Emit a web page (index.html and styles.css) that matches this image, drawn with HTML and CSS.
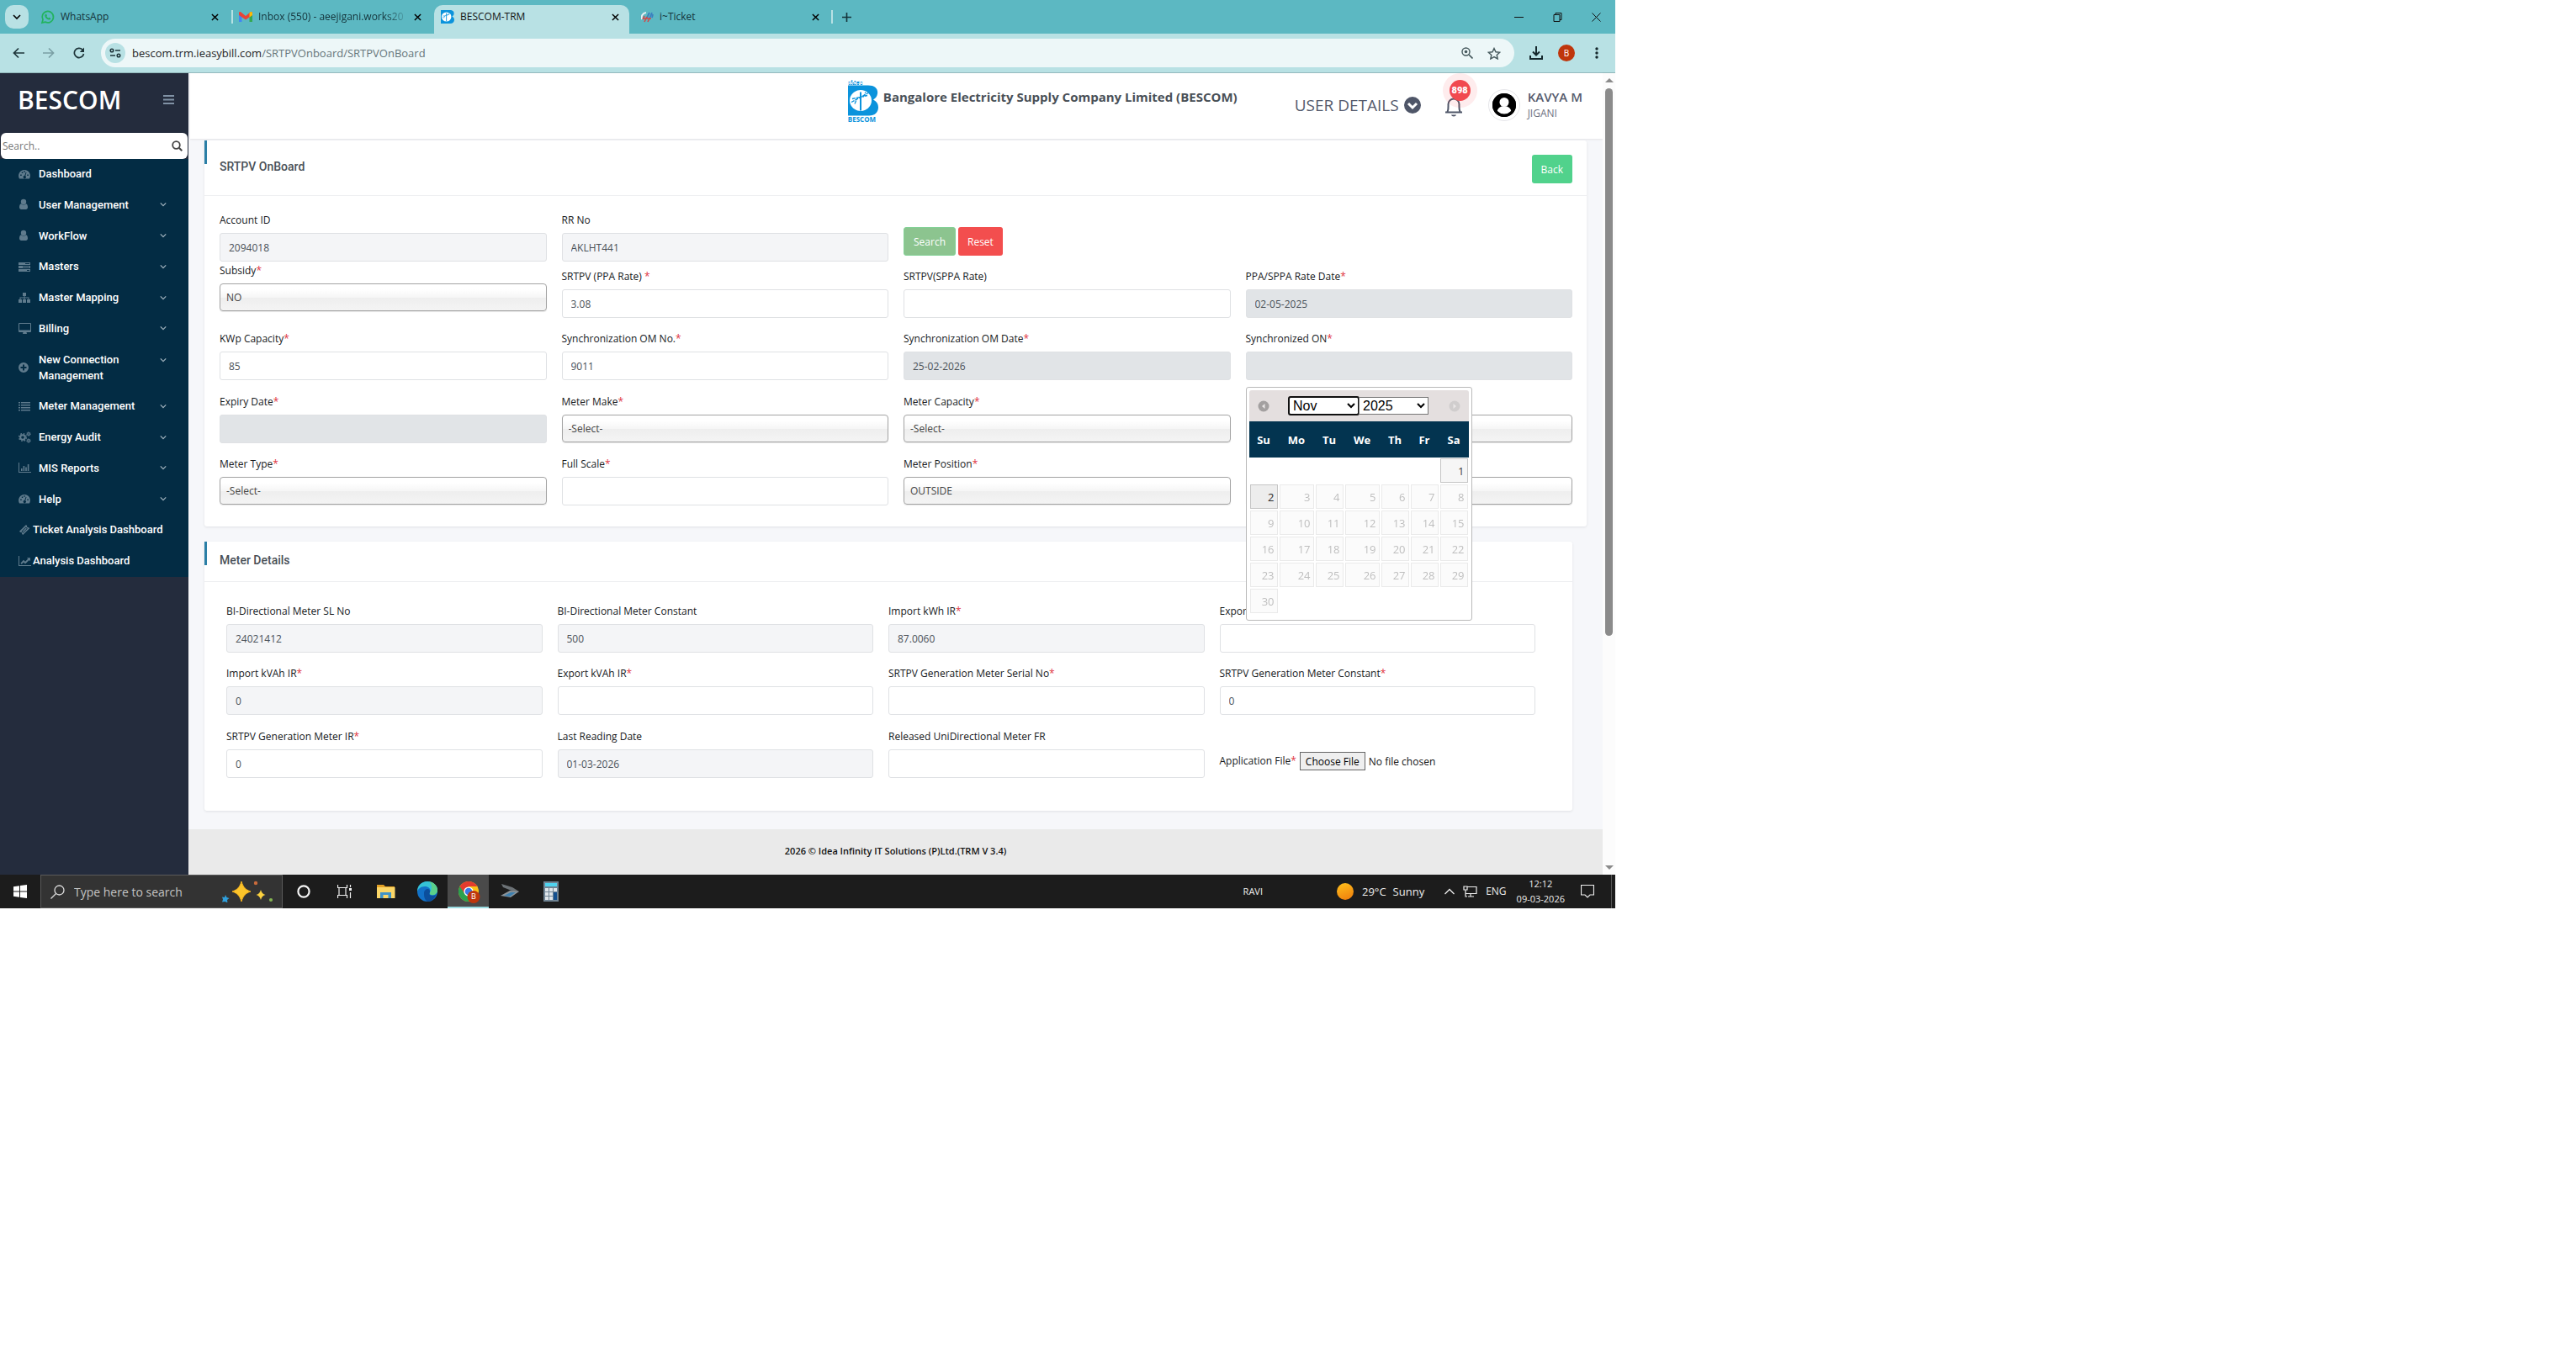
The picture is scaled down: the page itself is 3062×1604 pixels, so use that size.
FILE: index.html
```html
<!DOCTYPE html>
<html lang="en">
<head>
    <meta charset="UTF-8">
    <meta name="viewport" content="width=device-width, initial-scale=1.0">
    <title>BESCOM-TRM</title>
    <link rel="stylesheet" href="styles.css">
</head>
<body>

    <!-- Icon sprite -->
    <svg class="sprite" aria-hidden="true">
        <symbol id="i-close" viewBox="0 0 10 10"><path d="M1 1l8 8M9 1l-8 8" fill="none" stroke="currentColor" stroke-width="1.6"/></symbol>
        <symbol id="i-down" viewBox="0 0 10 10"><path d="M1 3l4 4 4-4" fill="none" stroke="currentColor" stroke-width="1.6"/></symbol>
        <symbol id="i-gauge" viewBox="0 0 14 12"><path fill="currentColor" fill-rule="evenodd" d="M7 1a7 7 0 0 0-6 10.500h12A7 7 0 0 0 7 1zM2.200 6.500h1.500V8H2.200zM3.800 3.500h1.500V5H3.800zM6.300 2.200h1.500v1.500H6.300zM10.300 6.500h1.500V8h-1.500zM8.700 3.800l.8.3-1.300 4.100a1.600 1.600 0 1 1-1-.3z"/></symbol>
        <symbol id="i-user" viewBox="0 0 12 14"><g fill="currentColor"><circle cx="6" cy="4" r="3.200"/><path d="M3 6.300C1.600 6.800 1 8.500 1 10.500 1 12 2 13 3.200 13h5.600C10 13 11 12 11 10.500c0-2-.6-3.700-2-4.200-1.700 1.700-4.300 1.700-6 0z"/></g></symbol>
        <symbol id="i-tasks" viewBox="0 0 14 12"><path fill="currentColor" fill-rule="evenodd" d="M0 1h14v3H0zm8 1v1h5V2zM0 5h14v3H0zm5 1v1h8V6zM0 9h14v3H0zm10 1v1h3v-1z"/></symbol>
        <symbol id="i-sitemap" viewBox="0 0 14 12"><path fill="currentColor" d="M5 0h4v4H7.500v1.500H12.500V8H14v4h-4V8h1.500V6.500h-4V8H9v4H5V8h1.500V6.500h-4V8H4v4H0V8h1.500V5.500h5V4H5z"/></symbol>
        <symbol id="i-desktop" viewBox="0 0 15 13"><path fill="currentColor" fill-rule="evenodd" d="M1 0h13a1 1 0 0 1 1 1v9a1 1 0 0 1-1 1H9.500l.5 2H5l.5-2H1a1 1 0 0 1-1-1V1a1 1 0 0 1 1-1zm0 1v7.500h13V1z"/></symbol>
        <symbol id="i-plus" viewBox="0 0 12 12"><path fill="currentColor" fill-rule="evenodd" d="M6 0a6 6 0 1 0 0 12A6 6 0 0 0 6 0zM5 2.500h2V5h2.500v2H7v2.500H5V7H2.500V5H5z"/></symbol>
        <symbol id="i-list" viewBox="0 0 14 12"><path fill="currentColor" d="M0 1h2v1.600H0zM3 1h11v1.600H3zM0 4h2v1.600H0zM3 4h11v1.600H3zM0 7h2v1.600H0zM3 7h11v1.600H3zM0 10h2v1.600H0zM3 10h11v1.600H3z"/></symbol>
        <symbol id="i-cogs" viewBox="0 0 15 14"><g fill="none" stroke="currentColor"><circle cx="5" cy="7" r="2.800" stroke-width="2"/><circle cx="5" cy="7" r="4.300" stroke-width="1.500" stroke-dasharray="1.700 1.700"/><circle cx="12" cy="3" r="1.400" stroke-width="1.200"/><circle cx="12" cy="3" r="2.300" stroke-dasharray=".9 .9"/><circle cx="12" cy="11" r="1.400" stroke-width="1.200"/><circle cx="12" cy="11" r="2.300" stroke-dasharray=".9 .9"/></g></symbol>
        <symbol id="i-bars" viewBox="0 0 15 12"><path fill="currentColor" d="M0 0h1v11h14v1H0zM3 7h1.600v3H3zM5.600 4h1.600v6H5.600zM8.200 5.500h1.600V10H8.200zM10.800 2h1.600v8h-1.600z"/></symbol>
        <symbol id="i-ticket" viewBox="0 0 14 14"><path fill="currentColor" fill-rule="evenodd" d="M9 1l1.200 1.200a1.300 1.300 0 0 0 1.800 1.800L13.200 5.200 5.200 13 4 11.800A1.300 1.300 0 0 0 2.200 10L1 8.800zM8.800 3.500L3.500 8.800l2 2 5.200-5.300zM8.800 4.600l1 1-4.200 4.200-1-1z"/></symbol>
        <symbol id="i-line" viewBox="0 0 15 12"><path fill="currentColor" d="M0 0h1v11h14v1H0zM2.500 8.500L6 4.800l2 2 3.200-3.300L10 2.300h4v4l-1.300-1.200L8 9.600l-2-2-2.300 2.300z"/></symbol>
        <symbol id="i-bescom" viewBox="0 0 36 36"><path fill="#0b93dc" d="M0 0h24c8 0 12 4 11 10-.4 3-2 5-5 7 4 2 6 5 6 9 0 6-4 10-11 10H0z"/><ellipse cx="15" cy="18" rx="13" ry="12.500" fill="#fff"/><path d="M4 20l20-11M5 16l18-4M8 22l3-7M18 14l3-6" fill="none" stroke="#0b93dc" stroke-width="1.300" stroke-dasharray="4 1"/><path d="M14 8h2v22h-2z" fill="#0b93dc"/></symbol>
    </svg>

    <div class="screen">

        <!-- Browser tabs -->
        <div class="tabs">
            <button class="tab-menu" aria-label="Search tabs"><svg width="10" height="10"><use href="#i-down"/></svg></button>
            <div class="tab">
                <svg width="17" height="17" viewBox="0 0 17 17"><path d="M2 15l1-3.500a6.700 6.700 0 1 1 2.700 2.600z" fill="none" stroke="#22b35e" stroke-width="1.700"/><path d="M6 5l1-.5 1 2-.6.8c.6 1.200 1.200 1.700 2.300 2.300l.8-.8 1.800 1c0 1.500-1.300 2-2.500 1.700C7.500 11 5.500 9 5.200 6.800 5.200 6 5.500 5.400 6 5z" fill="#22b35e"/></svg>
                <span>WhatsApp</span>
                <button aria-label="Close tab"><svg width="9" height="9"><use href="#i-close"/></svg></button>
            </div>
            <div class="tab divided">
                <svg width="16" height="12" viewBox="0 0 16 12"><path d="M0 1h3.500v11H0z" fill="#4285f4"/><path d="M12.500 1H16v11h-3.500z" fill="#34a853"/><path d="M0 1.500C0 0 1.500-.3 2.500.5L8 5 13.500.5C14.500-.3 16 0 16 1.500V4L8 9.500 0 4z" fill="#ea4335"/><path d="M12.500 1.300C14-.6 16 0 16 1.700V4l-3.500 2.500z" fill="#fbbc04"/></svg>
                <span class="fade">Inbox (550) - aeejigani.works20</span>
                <button aria-label="Close tab"><svg width="9" height="9"><use href="#i-close"/></svg></button>
            </div>
            <div class="tab active">
                <svg width="16" height="16"><use href="#i-bescom"/></svg>
                <span>BESCOM-TRM</span>
                <button aria-label="Close tab"><svg width="9" height="9"><use href="#i-close"/></svg></button>
            </div>
            <div class="tab">
                <svg width="15" height="15" viewBox="0 0 15 15"><path d="M1 10a6 6 0 0 1 5-8" fill="none" stroke="#e7eef2" stroke-width="2"/><path d="M7 8l3-6M10 9l3-7M13 8l1-4" stroke="#3a7fc0" stroke-width="1.800"/><path d="M2 10l2-4M4 13l3-6M8 13l2-4M3 9h9" stroke="#d34848" stroke-width="1.600"/></svg>
                <span>i~Ticket</span>
                <button aria-label="Close tab"><svg width="9" height="9"><use href="#i-close"/></svg></button>
            </div>
            <button class="new-tab" aria-label="New tab"><svg width="11" height="11" viewBox="0 0 11 11"><path d="M5.500 0v11M0 5.500h11" stroke="#14333a" stroke-width="1.600"/></svg></button>
            <div class="window-buttons">
                <button aria-label="Minimise"><svg width="11" height="11" viewBox="0 0 11 11"><path d="M0 5.500h11" stroke="#111"/></svg></button>
                <button aria-label="Restore"><svg width="11" height="11" viewBox="0 0 11 11"><path d="M1 2.500h7v8H1zM3 2.500v-2h7v8H8" fill="none" stroke="#111"/></svg></button>
                <button aria-label="Close window"><svg width="11" height="11" viewBox="0 0 11 11"><path d="M.5.5l10 10M10.500.5l-10 10" stroke="#111" fill="none"/></svg></button>
            </div>
        </div>

        <!-- Address bar -->
        <div class="toolbar">
            <button aria-label="Back"><svg width="14" height="14" viewBox="0 0 14 14"><path d="M14 7H2M7 1.500L1.500 7 7 12.500" fill="none" stroke="#1d3439" stroke-width="1.700"/></svg></button>
            <button aria-label="Forward"><svg width="14" height="14" viewBox="0 0 14 14"><path d="M0 7h12M7 1.500L12.500 7 7 12.500" fill="none" stroke="#7a9fa4" stroke-width="1.700"/></svg></button>
            <button aria-label="Reload"><svg width="14" height="14" viewBox="0 0 14 14"><path d="M12.500 8A5.600 5.600 0 1 1 11 3l1.500 1.500" fill="none" stroke="#1d3439" stroke-width="1.700"/><path d="M13 .5V6H7.800z" fill="#1d3439"/></svg></button>
            <div class="address">
                <span class="site-info"><svg width="14" height="12" viewBox="0 0 14 12"><g fill="none" stroke="#1d3439" stroke-width="1.500"><circle cx="3" cy="3" r="1.800"/><path d="M7 3h6M1 9h6"/><circle cx="11" cy="9" r="1.800"/></g></svg></span>
                <span class="url">bescom.trm.ieasybill.com<i>/SRTPVOnboard/SRTPVOnBoard</i></span>
                <svg width="14" height="14" viewBox="0 0 14 14"><circle cx="5.500" cy="5.500" r="4.500" fill="none" stroke="#45585c" stroke-width="1.400"/><circle cx="5.500" cy="5.500" r="1.800" fill="#45585c"/><path d="M9 9l4.500 4.500" stroke="#45585c" stroke-width="1.700"/></svg>
                <svg width="16" height="15" viewBox="0 0 16 15"><path d="M8 1.500l2 4.300 4.700.5-3.500 3.100 1 4.600L8 11.600 3.800 14l1-4.600L1.300 6.300 6 5.800z" fill="none" stroke="#45585c" stroke-width="1.400"/></svg>
            </div>
            <button aria-label="Downloads"><svg width="16" height="16" viewBox="0 0 16 16"><path d="M8 0v10M4 6.500l4 4 4-4M1 11v4h14v-4" fill="none" stroke="#14272b" stroke-width="2"/></svg></button>
            <span class="profile">B</span>
            <button aria-label="Menu"><svg width="4" height="14" viewBox="0 0 4 14"><g fill="#14272b"><circle cx="2" cy="2" r="1.700"/><circle cx="2" cy="7" r="1.700"/><circle cx="2" cy="12" r="1.700"/></g></svg></button>
        </div>

        <div class="app">

            <!-- Sidebar -->
            <aside class="sidebar">
                <div class="brand">
                    <span>BESCOM</span>
                    <button aria-label="Toggle menu"><svg width="13" height="11" viewBox="0 0 13 11"><path d="M0 1h13M0 5.500h13M0 10h13" stroke="#8092a5" stroke-width="2"/></svg></button>
                </div>
                <div class="menu-search">
                    <input type="text" placeholder="Search.." aria-label="Search menu">
                    <svg width="13" height="13" viewBox="0 0 13 13"><circle cx="5.500" cy="5.500" r="4.300" fill="none" stroke="#444" stroke-width="1.800"/><path d="M8.800 8.800L12.300 12.300" stroke="#444" stroke-width="2"/></svg>
                </div>
                <ul class="menu">
                    <li><a href="#"><svg width="14" height="12"><use href="#i-gauge"/></svg><span>Dashboard</span></a></li>
                    <li><a href="#"><svg width="12" height="14"><use href="#i-user"/></svg><span>User Management</span><svg class="arrow"><use href="#i-down"/></svg></a></li>
                    <li><a href="#"><svg width="12" height="14"><use href="#i-user"/></svg><span>WorkFlow</span><svg class="arrow"><use href="#i-down"/></svg></a></li>
                    <li><a href="#"><svg width="14" height="12"><use href="#i-tasks"/></svg><span>Masters</span><svg class="arrow"><use href="#i-down"/></svg></a></li>
                    <li><a href="#"><svg width="14" height="12"><use href="#i-sitemap"/></svg><span>Master Mapping</span><svg class="arrow"><use href="#i-down"/></svg></a></li>
                    <li><a href="#"><svg width="15" height="13"><use href="#i-desktop"/></svg><span>Billing</span><svg class="arrow"><use href="#i-down"/></svg></a></li>
                    <li><a href="#"><svg width="12" height="12"><use href="#i-plus"/></svg><span>New Connection Management</span><svg class="arrow top"><use href="#i-down"/></svg></a></li>
                    <li><a href="#"><svg width="14" height="12"><use href="#i-list"/></svg><span>Meter Management</span><svg class="arrow"><use href="#i-down"/></svg></a></li>
                    <li><a href="#"><svg width="15" height="14"><use href="#i-cogs"/></svg><span>Energy Audit</span><svg class="arrow"><use href="#i-down"/></svg></a></li>
                    <li><a href="#"><svg width="15" height="12"><use href="#i-bars"/></svg><span>MIS Reports</span><svg class="arrow"><use href="#i-down"/></svg></a></li>
                    <li><a href="#"><svg width="14" height="12"><use href="#i-gauge"/></svg><span>Help</span><svg class="arrow"><use href="#i-down"/></svg></a></li>
                    <li class="tight"><a href="#"><svg width="14" height="14"><use href="#i-ticket"/></svg><span>Ticket Analysis Dashboard</span></a></li>
                    <li class="tight"><a href="#"><svg width="15" height="12"><use href="#i-line"/></svg><span>Analysis Dashboard</span></a></li>
                </ul>
            </aside>

            <div class="page">

                <!-- Top bar -->
                <header class="topbar">
                    <div class="company">
                        <div class="logo">
                            <small>ಬೆವಿಕಂ</small>
                            <svg width="36" height="37"><use href="#i-bescom"/></svg>
                            <b>BESCOM</b>
                        </div>
                        <h1>Bangalore Electricity Supply Company Limited (BESCOM)</h1>
                    </div>
                    <a href="#" class="user-details">USER DETAILS
                        <svg width="20" height="20" viewBox="0 0 20 20"><circle cx="10" cy="10" r="10" fill="#4f5668"/><path d="M5 8l5 5 5-5" fill="none" stroke="#fff" stroke-width="3"/></svg>
                    </a>
                    <button class="bell" aria-label="Notifications">
                        <svg width="22" height="24" viewBox="0 0 22 24"><path d="M1 18.500h20M3.500 18C5 15 4.500 12 4.500 9a6.500 6.500 0 0 1 13 0c0 3-.5 6 1 9" fill="none" stroke="#4f5668" stroke-width="2"/><path d="M8 21.500h6c-.5 2.500-5.500 2.500-6 0z" fill="#4f5668"/></svg>
                        <span class="count">898</span>
                    </button>
                    <div class="account">
                        <span class="avatar"><svg width="28" height="28" viewBox="0 0 28 28"><circle cx="14" cy="14" r="14" fill="#000"/><circle cx="14" cy="10.500" r="5.500" fill="#fff"/><path d="M5 23c1-5 4-7 6-7.500h6c2 .5 5 2.500 6 7.500-5 4-13 4-18 0z" fill="#fff"/><circle cx="14" cy="14" r="12.300" fill="none" stroke="#000" stroke-width="3.400"/></svg></span>
                        <div><strong>KAVYA M</strong><span>JIGANI</span></div>
                    </div>
                </header>

                <!-- SRTPV OnBoard -->
                <section class="card">
                    <div class="card-head main-head">
                        <h2>SRTPV OnBoard</h2>
                        <button class="btn btn-back">Back</button>
                    </div>
                    <div class="form-grid onboard">
                        <div class="field"><label for="account">Account ID</label><input type="text" id="account" value="2094018" readonly></div>
                        <div class="field"><label for="rrno">RR No</label><input type="text" id="rrno" value="AKLHT441" readonly></div>
                        <div class="actions"><button class="btn btn-search">Search</button><button class="btn btn-reset">Reset</button></div>
                        <div></div>

                        <div class="field"><label for="subsidy">Subsidy<em>*</em></label><select id="subsidy"><option>NO</option></select></div>
                        <div class="field"><label for="ppa">SRTPV (PPA Rate) <em>*</em></label><input type="text" id="ppa" value="3.08"></div>
                        <div class="field"><label for="sppa">SRTPV(SPPA Rate)</label><input type="text" id="sppa"></div>
                        <div class="field"><label for="ratedate">PPA/SPPA Rate Date<em>*</em></label><input type="text" id="ratedate" value="02-05-2025" disabled></div>

                        <div class="field"><label for="kwp">KWp Capacity<em>*</em></label><input type="text" id="kwp" value="85"></div>
                        <div class="field"><label for="omno">Synchronization OM No.<em>*</em></label><input type="text" id="omno" value="9011"></div>
                        <div class="field"><label for="omdate">Synchronization OM Date<em>*</em></label><input type="text" id="omdate" value="25-02-2026" disabled></div>
                        <div class="field has-calendar">
                            <label for="syncon">Synchronized ON<em>*</em></label><input type="text" id="syncon" disabled>
                            <div class="calendar">
                                <div class="calendar-head">
                                    <button aria-label="Prev"><svg width="14" height="14" viewBox="0 0 14 14"><circle cx="7" cy="7" r="6.500" fill="#a3a0a0"/><path d="M8.500 4v6L5 7z" fill="#e9e6e6"/></svg></button>
                                    <div>
                                        <select class="focused" aria-label="Month"><option>Nov</option></select><select aria-label="Year"><option>2025</option></select>
                                    </div>
                                    <button aria-label="Next"><svg width="14" height="14" viewBox="0 0 14 14"><circle cx="7" cy="7" r="6.500" fill="#d0cdcd"/><path d="M5.500 4v6L9 7z" fill="#e9e6e6"/></svg></button>
                                </div>
                                <table>
                                    <thead><tr><th>Su</th><th class="wide">Mo</th><th>Tu</th><th class="wide">We</th><th>Th</th><th>Fr</th><th>Sa</th></tr></thead>
                                    <tbody>
                                        <tr><td></td><td></td><td></td><td></td><td></td><td></td><td><a href="#">1</a></td></tr>
                                        <tr><td><a href="#" class="current">2</a></td><td><span>3</span></td><td><span>4</span></td><td><span>5</span></td><td><span>6</span></td><td><span>7</span></td><td><span>8</span></td></tr>
                                        <tr><td><span>9</span></td><td><span>10</span></td><td><span>11</span></td><td><span>12</span></td><td><span>13</span></td><td><span>14</span></td><td><span>15</span></td></tr>
                                        <tr><td><span>16</span></td><td><span>17</span></td><td><span>18</span></td><td><span>19</span></td><td><span>20</span></td><td><span>21</span></td><td><span>22</span></td></tr>
                                        <tr><td><span>23</span></td><td><span>24</span></td><td><span>25</span></td><td><span>26</span></td><td><span>27</span></td><td><span>28</span></td><td><span>29</span></td></tr>
                                        <tr><td><span>30</span></td><td></td><td></td><td></td><td></td><td></td><td></td></tr>
                                    </tbody>
                                </table>
                            </div>
                        </div>

                        <div class="field"><label for="expiry">Expiry Date<em>*</em></label><input type="text" id="expiry" disabled></div>
                        <div class="field"><label for="make">Meter Make<em>*</em></label><select id="make"><option>-Select-</option></select></div>
                        <div class="field"><label for="capacity">Meter Capacity<em>*</em></label><select id="capacity"><option>-Select-</option></select></div>
                        <div class="field no-label"><select aria-label="Meter option"><option></option></select></div>

                        <div class="field"><label for="mtype">Meter Type<em>*</em></label><select id="mtype"><option>-Select-</option></select></div>
                        <div class="field"><label for="scale">Full Scale<em>*</em></label><input type="text" id="scale"></div>
                        <div class="field"><label for="position">Meter Position<em>*</em></label><select id="position"><option>OUTSIDE</option></select></div>
                        <div class="field no-label"><select aria-label="Position option"><option></option></select></div>
                    </div>
                </section>

                <!-- Meter Details -->
                <section class="card card-meter">
                    <div class="card-head"><h2>Meter Details</h2></div>
                    <div class="form-grid meter">
                        <div class="field"><label for="slno">BI-Directional Meter SL No</label><input type="text" id="slno" value="24021412" readonly></div>
                        <div class="field"><label for="const">BI-Directional Meter Constant</label><input type="text" id="const" value="500" readonly></div>
                        <div class="field"><label for="ikwh">Import kWh IR<em>*</em></label><input type="text" id="ikwh" value="87.0060" readonly></div>
                        <div class="field"><label for="ekwh">Export kWh IR<em>*</em></label><input type="text" id="ekwh"></div>

                        <div class="field"><label for="ikvah">Import kVAh IR<em>*</em></label><input type="text" id="ikvah" value="0" readonly></div>
                        <div class="field"><label for="ekvah">Export kVAh IR<em>*</em></label><input type="text" id="ekvah"></div>
                        <div class="field"><label for="gserial">SRTPV Generation Meter Serial No<em>*</em></label><input type="text" id="gserial"></div>
                        <div class="field"><label for="gconst">SRTPV Generation Meter Constant<em>*</em></label><input type="text" id="gconst" value="0"></div>

                        <div class="field"><label for="gir">SRTPV Generation Meter IR<em>*</em></label><input type="text" id="gir" value="0"></div>
                        <div class="field"><label for="lastread">Last Reading Date</label><input type="text" id="lastread" value="01-03-2026" readonly></div>
                        <div class="field"><label for="released">Released UniDirectional Meter FR</label><input type="text" id="released"></div>
                        <div class="file-field"><label for="appfile">Application File<em>*</em></label><input type="file" id="appfile"></div>
                    </div>
                </section>

                <footer class="footer">2026 © Idea Infinity IT Solutions (P)Ltd.(TRM V 3.4)</footer>
            </div>

            <!-- Page scrollbar -->
            <div class="scrollbar">
                <span class="scroll-up"></span>
                <div class="track"><div class="thumb"></div></div>
                <span class="scroll-down"></span>
            </div>
        </div>

        <!-- Taskbar -->
        <div class="taskbar">
            <button class="start" aria-label="Start"><svg width="16" height="16" viewBox="0 0 16 16"><path fill="#fff" d="M0 2.200l7-1v6.300H0zM8 1l8-1v7.500H8zM0 8.500h7v6.300l-7-1zM8 8.500h8V16l-8-1z"/></svg></button>
            <div class="task-search">
                <svg width="17" height="17" viewBox="0 0 17 17"><circle cx="10.500" cy="6.500" r="5.500" fill="none" stroke="#ddd" stroke-width="1.300"/><path d="M6.500 10.500L.5 16.500" stroke="#ddd" stroke-width="1.300"/></svg>
                <input type="text" placeholder="Type here to search" aria-label="Type here to search">
                <svg width="62" height="26" viewBox="0 0 62 26"><path d="M24 1c2 7 5 10 11 12-6 2-9 5-11 12-2-7-5-10-11-12 6-2 9-5 11-12z" fill="#fcc42a" stroke="#f3b11f"/><path d="M47 11c1 3.500 2.500 5 5.500 6-3 1-4.500 2.500-5.500 6-1-3.500-2.500-5-5.500-6 3-1 4.500-2.500 5.500-6z" fill="#fbd13f"/><path d="M5 17l1.500 3 3 1-2.500 2 .5 3.500-3-1.500-3.500.5 1-3-1-3 3 .5z" fill="#2f9fdc"/><circle cx="41" cy="3" r="2.200" fill="#c96b3c"/><circle cx="59" cy="23" r="2.100" fill="#84b552"/></svg>
            </div>
            <button class="task" aria-label="Cortana"><svg width="16" height="16" viewBox="0 0 16 16"><circle cx="8" cy="8" r="6.600" fill="none" stroke="#f4f4f4" stroke-width="2.200"/></svg></button>
            <button class="task" aria-label="Task view"><svg width="17" height="16" viewBox="0 0 17 16"><path d="M.5 0v3.500h11V0M.5 16v-3.500h11V16M2 3.500v9M10 3.500v9M15.500 0v3M15.500 9v7" fill="none" stroke="#eee" stroke-width="1.200"/><path d="M14 4h3v3h-3z" fill="#eee"/></svg></button>
            <button class="task" aria-label="File Explorer"><svg width="22" height="18" viewBox="0 0 22 18"><path d="M0 1h8l2 2h11v4H0z" fill="#e2a025"/><path d="M0 4h21.500v13H0z" fill="#fbd667"/><path d="M4 17v-7h13v7h-3.500v-4h-6v4z" fill="#3f93c8"/></svg></button>
            <button class="task" aria-label="Edge"><svg width="24" height="24" viewBox="0 0 24 24"><circle cx="12" cy="12" r="12" fill="#1272c8"/><path d="M0 12C0 5 5 0 12 0s12 5 12 10c0 4-3 6-6 6-2 0-4-1-3-3 2-4-2-7-6-7-5 0-8 3-9 6z" fill="#35c3d6"/><path d="M14 .2c6 1 10 5 10 10 0 4-3 6-6 6-2 0-4-1-3-3C18 9 18 4 14 .2z" fill="#5bd18a"/><path d="M8 14c0-3 2-5 5-5 2 1 2.500 3 1.500 5-1 3 3 4 8 2-2 5-6 8-10 8-4-2-4.500-6-4.500-10z" fill="#0c4f9c"/></svg></button>
            <button class="task open" aria-label="Chrome"><svg width="26" height="26" viewBox="0 0 26 26"><circle cx="12" cy="12" r="12" fill="#fbc116"/><path d="M12 12L1.600 6A12 12 0 0 0 12 24l4-7z" fill="#2ca14e"/><path d="M12 6h10.400A12 12 0 0 0 1.600 6L7 14z" fill="#e33b2e"/><circle cx="12" cy="12" r="5.600" fill="#fff"/><circle cx="12" cy="12" r="4.300" fill="#3b78e7"/><circle cx="18" cy="18.500" r="7.500" fill="#bf360c"/></svg><span>B</span></button>
            <button class="task" aria-label="Scanner"><svg width="24" height="18" viewBox="0 0 24 18"><path d="M2 0l13 4 8 5-4 1L4 4z" fill="#6c7276"/><path d="M1 14l11-6 11 1-10 7z" fill="#8d9499"/><path d="M5 14l8-4 6 0-7 5z" fill="#3d7fae"/></svg></button>
            <button class="task" aria-label="Calculator"><svg width="18" height="24" viewBox="0 0 18 24"><path d="M0 0h18v24H0z" fill="#6f8393"/><path d="M2 2h14v4H2z" fill="#4fd3ef"/><path d="M2 8h4v4H2zM7 8h4v4H7zM12 8h4v4h-4zM2 13h4v4H2zM7 13h4v4H7zM2 18h4v4H2zM7 18h4v4H7z" fill="#dfe5ea"/><path d="M12 13h4v9h-4z" fill="#14508f"/></svg></button>
            <div class="tray">
                <span class="ravi">RAVI</span>
                <span class="weather"><i></i>29°C <b>Sunny</b></span>
                <svg width="12" height="8" viewBox="0 0 12 8"><path d="M.5 7L6 1.500 11.500 7" fill="none" stroke="#eee" stroke-width="1.300"/></svg>
                <svg width="17" height="14" viewBox="0 0 17 14"><path d="M5 1.500h11v8H3V5M9 9.500v3M6 13h7M1 1h4v4H1zM3 5v8h2" fill="none" stroke="#eee" stroke-width="1.200"/></svg>
                <span class="lang">ENG</span>
                <span class="clock">12:12<br>09-03-2026</span>
                <svg width="16" height="16" viewBox="0 0 16 16"><path d="M.5.5h15v11.500h-4.500L8 15l-3-3H.5z" fill="none" stroke="#eee" stroke-width="1.200"/></svg>
            </div>
        </div>

    </div>

</body>
</html>
```
FILE: styles.css
```css
* {
    box-sizing: border-box;
}
body {
    margin: 0;
    background: #fff;
    font-family: "Open Sans", "Noto Sans", sans-serif;
    font-size: 12px;
    line-height: 20px;
    color: #16191c;
}
button, input, select {
    font-family: inherit;
    font-size: inherit;
}
button {
    border: none;
    background: none;
    padding: 0;
    cursor: pointer;
}
svg {
    display: block;
    flex: none;
}
a {
    text-decoration: none;
}
.sprite {
    display: none;
}
.screen {
    max-width: 1920px;
}

/* Browser tabs */
.tabs {
    display: flex;
    height: 40px;
    padding: 6px 17px 0 6px;
    background: #5cb8c2;
    color: #14333a;
}
.tab-menu {
    display: flex;
    align-items: center;
    justify-content: center;
    width: 28px;
    height: 28px;
    margin-right: 4px;
    border-radius: 10px;
    background: #b8e1e4;
}
.tab {
    display: flex;
    align-items: center;
    gap: 7px;
    width: 237px;
    height: 34px;
    padding: 0 15px 6px 10px;
}
.tab span {
    flex: 1;
    white-space: nowrap;
}
.tab.divided {
    width: 241px;
}
.tab.divided::before, .new-tab::before {
    content: "";
    width: 2px;
    height: 16px;
    margin-right: -7px;
    margin-left: -10px;
    background: #b8e1e4;
}
.tab.divided::before {
    margin-right: 0;
}
.tab .fade {
    flex: none;
    margin-right: auto;
    mask-image: linear-gradient(90deg, #000 88%, rgba(0, 0, 0, 0.2));
}
.tab.active {
    width: 232px;
    padding-right: 12px;
    padding-left: 8px;
    border-radius: 10px 10px 0 0;
    background: #b8e1e4;
    color: #111;
}
.tab.active + .tab {
    padding-right: 11px;
    padding-left: 14px;
}
.new-tab {
    display: flex;
    align-items: center;
    gap: 18px;
    height: 28px;
    margin-left: 13px;
}
.window-buttons {
    display: flex;
    gap: 35px;
    height: 28px;
    margin-left: auto;
}

/* Address bar */
.toolbar {
    display: flex;
    align-items: center;
    gap: 22px;
    height: 47px;
    padding: 0 20px 0 15px;
    background: #b8e1e4;
    border-bottom: 1px solid #90b6ba;
}
.address {
    display: flex;
    flex: 1;
    align-items: center;
    gap: 17px;
    height: 34px;
    margin-left: -3px;
    margin-right: -4px;
    padding: 0 16px 0 5px;
    border-radius: 17px;
    background: #edf7f8;
}
.site-info {
    display: flex;
    align-items: center;
    justify-content: center;
    width: 24px;
    height: 24px;
    border-radius: 50%;
    background: #b8e1e4;
}
.url {
    flex: 1;
    margin-left: -9px;
    font-size: 13px;
    color: #1f2426;
}
.url i {
    font-style: normal;
    color: #66757a;
}
.profile {
    width: 20px;
    height: 20px;
    margin: 0 2px 0 -4px;
    border-radius: 50%;
    background: #bf360c;
    color: #fff;
    font-size: 10px;
    text-align: center;
}

/* Application frame */
.app {
    display: flex;
    background: #f6f7fa;
}
.sidebar {
    flex: none;
    width: 224px;
    background: #242c3d;
}
.brand {
    display: flex;
    justify-content: space-between;
    align-items: center;
    height: 63px;
    padding: 0 17px 0 21px;
    color: #fff;
    font-size: 30px;
    font-weight: 600;
}
.menu-search {
    display: flex;
    align-items: center;
    height: 31px;
    margin: 8px 1px 0;
    padding: 0 6px 0 2px;
    border-radius: 6px;
    background: #fff;
}
.menu-search input {
    flex: 1;
    min-width: 0;
    border: none;
    padding: 0;
    outline: none;
    background: none;
}
.menu {
    display: flex;
    flex-direction: column;
    justify-content: space-between;
    min-height: 497px;
    margin: 0;
    padding: 0 0 2px;
    list-style: none;
    background: #032c44;
}
.menu a {
    display: flex;
    align-items: center;
    padding: 8px 26px 8px 22px;
    color: #fff;
    font-family: Roboto, sans-serif;
    font-size: 13px;
    font-weight: 500;
    line-height: 19px;
}
.menu a svg {
    color: #5f7b8d;
}
.menu a span {
    flex: 1;
    padding-left: 24px;
}
.menu svg:first-child {
    margin-right: -14px;
}
.menu svg[width="12"] {
    margin-right: -12px;
}
.menu svg[width="15"] {
    margin-right: -15px;
}
.menu .tight span {
    padding-left: 17px;
}
.menu a .arrow {
    width: 8px;
    height: 8px;
    color: #9fb1bc;
}
.menu .top {
    align-self: flex-start;
    margin-top: 6px;
}
.page {
    display: flex;
    flex: 1;
    flex-direction: column;
    min-width: 0;
}

/* Top bar */
.topbar {
    display: flex;
    align-items: flex-start;
    height: 78px;
    margin-left: 2px;
    padding-right: 24px;
    background: #fff;
    box-shadow: 0 1px 2px #e3e4e6;
}
.company {
    display: flex;
    flex: 1;
    gap: 6px;
    justify-content: flex-end;
    padding-right: 68px;
}
.company h1 {
    margin: 18px 0 0;
    color: #495057;
    font-size: 15px;
    font-weight: 700;
    line-height: 20px;
    white-space: nowrap;
}
.logo {
    display: flex;
    flex-direction: column;
    padding-top: 7px;
    color: #0b93dc;
}
.logo small, .logo b {
    height: 7px;
    font-size: 8px;
    line-height: 7px;
}
.user-details {
    display: flex;
    align-items: center;
    gap: 6px;
    margin: 28px 28px 0 0;
    color: #555b6d;
    font-size: 19px;
    white-space: nowrap;
}
.bell {
    position: relative;
    margin: 28px 30px 0 0;
}
.count {
    position: absolute;
    top: -20px;
    left: 6px;
    width: 25px;
    height: 25px;
    border-radius: 50%;
    background: #f1494f;
    box-shadow: 0 0 0 8px rgba(241, 73, 79, 0.1);
    color: #fff;
    font-family: Roboto, sans-serif;
    font-size: 11px;
    font-weight: 900;
    line-height: 25px;
}
.account {
    display: flex;
    align-items: center;
    gap: 9px;
    margin-top: 19px;
    color: #6c7080;
    line-height: 19px;
}
.account strong {
    display: block;
    color: #555b6d;
    font-size: 15px;
    font-weight: 600;
}
.avatar {
    padding: 4px;
    border: 1px solid #e6e6ea;
    border-radius: 50%;
}

/* Cards */
.card {
    position: relative;
    margin: 2px 19px 18px;
    border-radius: 3px;
    background: #fff;
    box-shadow: 0 1px 3px #dfe1e5;
}
.card::before {
    content: "";
    position: absolute;
    top: 0;
    left: 0;
    width: 3px;
    height: 28px;
    background: #2b7fa6;
}
.card-meter {
    margin: 0 36px 22px 19px;
}
.card-head {
    display: flex;
    align-items: center;
    justify-content: space-between;
    height: 48px;
    padding: 0 17px 3px 18px;
    border-bottom: 1px solid #eeeff1;
}
.main-head {
    height: 66px;
}
.card-head h2 {
    margin: 0;
    color: #495057;
    font-family: Roboto, sans-serif;
    font-size: 14px;
    font-weight: 500;
}
.btn {
    height: 34px;
    padding: 0 11px;
    border-radius: 3px;
    color: #fff;
}
.btn-back {
    margin-top: 6px;
    background: #51d28c;
}
.btn-search {
    background: #8cc48f;
    border: 1px solid #83d196;
}
.btn-reset {
    background: #f34e4e;
}

/* Forms */
.form-grid {
    display: grid;
    grid-template-columns: repeat(4, 1fr);
    column-gap: 18px;
}
.onboard {
    grid-template-rows: 60px 81px 75px 74px 74px;
    align-items: start;
    padding: 19px 17px 10px 18px;
}
.onboard .field:nth-child(n+6):nth-child(-n+8) {
    margin-top: 7px;
}
.meter {
    grid-template-rows: 74px 75px 74px;
    padding: 25px 44px 24px 26px;
}
.field {
    display: flex;
    flex-direction: column;
    gap: 5px;
    min-width: 0;
}
.no-label {
    padding-top: 25px;
}
label {
    font-weight: 500;
    white-space: nowrap;
}
label em {
    color: #e0343f;
    font-style: normal;
}
.field > input {
    width: 100%;
    height: 34px;
    padding: 0 10px;
    border: 1px solid #dfe1e4;
    border-radius: 3px;
    background: #fff;
    color: #495057;
}
.field > input:read-only {
    background: #f4f5f7;
}
.field > input:disabled {
    background: #e1e4e7;
}
.field > select {
    width: 100%;
    height: 33px;
    padding: 0 7px;
    border: 1px solid #a3a3a3;
    border-radius: 4px;
    background: linear-gradient(#fff 20%, #f6f6f6 50%, #eee 52%, #f4f4f4);
    box-shadow: 0 1px 1px rgba(0, 0, 0, 0.1);
    color: #444;
    appearance: none;
}
.actions {
    display: flex;
    gap: 3px;
    padding-top: 18px;
}
.file-field {
    display: flex;
    align-items: center;
    gap: 4px;
    height: 60px;
    padding-top: 18px;
}
.file-field input {
    min-width: 0;
    color: #111;
    font-size: 12px;
}
.file-field input::file-selector-button {
    height: 22px;
    padding: 0 6px;
    border: 1px solid #666;
    background: #efefef;
    font: inherit;
}

/* Date picker */
.has-calendar {
    position: relative;
}
.calendar {
    position: absolute;
    top: 67px;
    left: 0;
    z-index: 2;
    padding: 3px 3px 7px;
    border: 1px solid #b9b9b9;
    border-radius: 3px;
    background: #fff;
}
.calendar-head {
    display: flex;
    align-items: center;
    justify-content: space-between;
    height: 37px;
    padding: 0 10px;
    border-radius: 3px 3px 0 0;
    background: #e4dfdf;
}
.calendar-head div {
    display: flex;
}
.calendar-head select {
    width: 83px;
    height: 21px;
    border: 1px solid #767676;
    background: #fff;
    color: #000;
    font-family: "Liberation Sans", Arial, sans-serif;
    font-size: 16px;
}
.calendar-head .focused {
    border-radius: 2px;
    outline: 2px solid #101010;
    outline-offset: -1px;
}
.calendar table {
    border-collapse: collapse;
    table-layout: fixed;
    font-size: 13px;
}
.calendar th {
    width: 35px;
    height: 43px;
    padding: 0;
    background: #033450;
    color: #fff;
    font-weight: 700;
}
.calendar th.wide {
    width: 43px;
}
.calendar td {
    height: 31px;
    padding: 1px;
}
.calendar td a, .calendar td span {
    display: block;
    height: 29px;
    padding-right: 3px;
    border: 1px solid #c5c5c5;
    background: #f6f6f6;
    color: #454545;
    line-height: 28px;
    text-align: right;
}
.calendar td span {
    opacity: 0.35;
}
.calendar td a.current {
    background: #ededed;
    color: #2b2b2b;
}

.footer {
    height: 54px;
    margin-top: auto;
    background: #eaeaea;
    color: #111;
    font-size: 11px;
    font-weight: 600;
    line-height: 52px;
    text-align: center;
}

/* Scrollbar */
.scrollbar {
    display: flex;
    flex: none;
    flex-direction: column;
    align-items: center;
    width: 15px;
    padding: 6px 0;
    background: #fcfcfc;
}
.track {
    flex: 1;
    padding: 7px 0;
}
.thumb {
    width: 9px;
    height: 71%;
    border-radius: 5px;
    background: #8b8b8b;
}
.scroll-up, .scroll-down {
    border: 5px solid transparent;
    border-top-width: 0;
    border-bottom: 5px solid #8b8b8b;
}
.scroll-down {
    border-bottom: 0;
    border-top: 5px solid #8b8b8b;
}

/* Taskbar */
.taskbar {
    display: flex;
    height: 40px;
    background: #1c1c1c;
    color: #eee;
}
.taskbar button {
    display: flex;
    align-items: center;
    justify-content: center;
    position: relative;
    width: 49px;
}
.taskbar .start {
    width: 48px;
}
.task-search {
    display: flex;
    align-items: center;
    width: 288px;
    padding: 0 10px 0 11px;
    border: 1px solid #5a5a5a;
    background: #333;
}
.task-search input {
    flex: 1;
    min-width: 0;
    padding: 0 0 0 11px;
    border: none;
    outline: none;
    background: none;
    color: #ccc;
    font-size: 14px;
}
.task-search input::placeholder {
    color: #c4c4c4;
}
.taskbar .open {
    background: #4a4a4a;
    border-bottom: 2px solid #9adbe0;
}
.taskbar .open svg {
    margin: 4px 0 0 2px;
}
.taskbar .open span {
    position: absolute;
    top: 16px;
    left: 28px;
    color: #fff;
    font-size: 9px;
    line-height: 20px;
}
.tray {
    display: flex;
    align-items: center;
    margin-left: auto;
    padding-right: 21px;
    border-right: 4px solid #1c1c1c;
    box-shadow: inset -1px 0 #555;
}
.ravi {
    margin-right: 88px;
    font-size: 11px;
}
.weather {
    display: flex;
    align-items: center;
    margin-right: 24px;
    font-size: 13px;
}
.weather i {
    width: 20px;
    height: 20px;
    margin-right: 10px;
    border-radius: 50%;
    background: linear-gradient(160deg, #ffc21c, #ee7a0c);
}
.weather b {
    margin-left: 8px;
    font-weight: 400;
}
.lang {
    margin: 0 12px 0 10px;
}
.tray svg + svg {
    margin-left: 10px;
}
.clock {
    margin-right: 19px;
    font-size: 11px;
    line-height: 18px;
    text-align: center;
}
```
